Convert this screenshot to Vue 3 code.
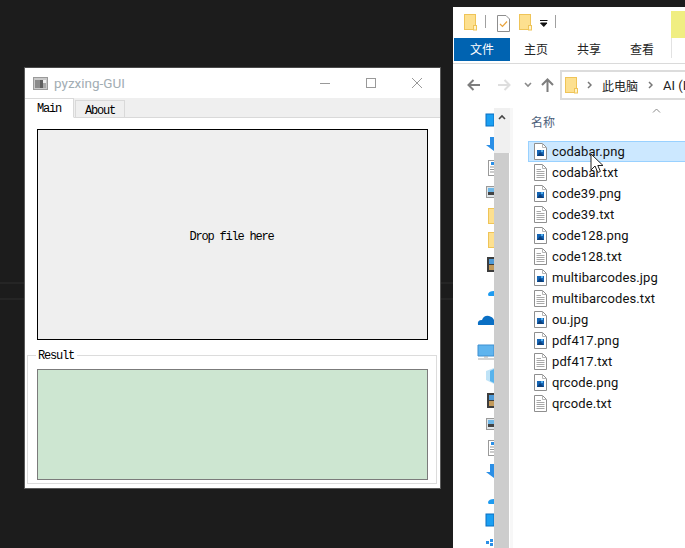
<script setup>
const files = [
  { name: 'codabar.png', type: 'img', selected: true },
  { name: 'codabar.txt', type: 'txt' },
  { name: 'code39.png', type: 'img' },
  { name: 'code39.txt', type: 'txt' },
  { name: 'code128.png', type: 'img' },
  { name: 'code128.txt', type: 'txt' },
  { name: 'multibarcodes.jpg', type: 'img' },
  { name: 'multibarcodes.txt', type: 'txt' },
  { name: 'ou.jpg', type: 'img' },
  { name: 'pdf417.png', type: 'img' },
  { name: 'pdf417.txt', type: 'txt' },
  { name: 'qrcode.png', type: 'img' },
  { name: 'qrcode.txt', type: 'txt' }
]
const folders = [208, 232]
const films = [257, 393]
const pics = [186, 418]
const docs = [160, 440]
const arrows = [137, 464]
const dots = [291, 499]
const blues = [114, 514]
</script>

<template>
  <div class="desktop">
    <div class="streak streak-a"></div>
    <div class="streak streak-b"></div>

    <section class="app-win">
      <header class="app-title">
        <svg class="app-icon" width="15" height="13" viewBox="0 0 15 13">
          <rect x="0.5" y="0.5" width="14" height="12" fill="#c9c9c9" stroke="#9a9a9a" />
          <rect x="2" y="3" width="5" height="8" fill="#8a8a8a" />
          <rect x="7" y="3" width="3" height="8" fill="#5f5f5f" />
          <rect x="10" y="3" width="3" height="3" fill="#efefef" />
          <rect x="10" y="6" width="3" height="5" fill="#a8a8a8" />
        </svg>
        <span class="app-name">pyzxing-GUI</span>
        <div class="win-btns">
          <svg width="12" height="12" viewBox="0 0 12 12"><path d="M1 6.5H11" stroke="#999" fill="none" /></svg>
          <svg width="12" height="12" viewBox="0 0 12 12"><rect x="1.5" y="1.5" width="9" height="9" stroke="#999" fill="none" /></svg>
          <svg width="12" height="12" viewBox="0 0 12 12"><path d="M1 1L11 11M11 1L1 11" stroke="#999" fill="none" /></svg>
        </div>
      </header>
      <nav class="tabs">
        <span class="tab active">Main</span>
        <span class="tab">About</span>
      </nav>
      <div class="drop">Drop file here</div>
      <fieldset class="group">
        <legend>Result</legend>
        <div class="result"></div>
      </fieldset>
    </section>

    <section class="explorer">
      <div class="quick">
        <svg width="14" height="17" viewBox="0 0 14 17"><use href="#folder" /></svg>
        <i class="qsep sep1"></i>
        <svg class="check" width="13" height="17" viewBox="0 0 13 17">
          <path d="M.5.5H9L12.5 4V16.5H.5Z" fill="#fff" stroke="#8e8e8e" />
          <path d="M3 9L5.5 11.5L10 6.5" fill="none" stroke="#e8a33c" stroke-width="1.2" />
        </svg>
        <svg class="f2" width="14" height="17" viewBox="0 0 14 17"><use href="#folder" /></svg>
        <svg class="drop-arrow" width="8" height="9" viewBox="0 0 8 9">
          <path d="M0 1.5H7.5M0.5 4H7L3.8 7.5Z" fill="#111" stroke="#111" stroke-width="1" />
        </svg>
        <i class="qsep sep2"></i>
      </div>
      <div class="ribbon">
        <span class="rtab file">文件</span>
        <span class="rtab t1">主页</span>
        <span class="rtab t2">共享</span>
        <span class="rtab t3">查看</span>
        <i class="rsep"></i>
      </div>
      <div class="nav">
        <svg width="14" height="12" viewBox="0 0 14 12" class="n-back"><path d="M13 6H2M6.5 1L1.5 6L6.5 11" fill="none" stroke="#7d7d7d" stroke-width="2" /></svg>
        <svg width="14" height="12" viewBox="0 0 14 12" class="n-fwd"><path d="M1 6H12M7.5 1L12.5 6L7.5 11" fill="none" stroke="#dedede" stroke-width="2" /></svg>
        <svg width="8" height="6" viewBox="0 0 8 6" class="n-more"><path d="M1 1L4 4L7 1" fill="none" stroke="#8a8a8a" stroke-width="1.6" /></svg>
        <svg width="13" height="14" viewBox="0 0 13 14" class="n-up"><path d="M6.5 14V2M1 7L6.5 1.5L12 7" fill="none" stroke="#7d7d7d" stroke-width="2" /></svg>
        <div class="address">
          <svg width="14" height="17" viewBox="0 0 14 17"><use href="#folder" /></svg>
          <svg class="crumb c1" width="5" height="8" viewBox="0 0 5 8"><path d="M1 1L4 4L1 7" fill="none" stroke="#777" stroke-width="1.5" /></svg>
          <span class="pc">此电脑</span>
          <svg class="crumb c2" width="5" height="8" viewBox="0 0 5 8"><path d="M1 1L4 4L1 7" fill="none" stroke="#777" stroke-width="1.5" /></svg>
          <span class="drive">AI (I:)</span>
        </div>
      </div>
      <div class="body">
        <svg class="side" width="41" height="440" viewBox="453 108 41 440">
          <g v-for="y in blues" :key="y">
            <rect x="486" :y="y" width="8" height="12" fill="#1a9ff2" stroke="#0b6fc0" />
          </g>
          <path v-for="y in arrows" :key="y" :d="`M490 ${y}H494V${y + 14}L486 ${y + 8}H490Z`" fill="#2b8fe6" />
          <g v-for="y in docs" :key="y">
            <rect x="488.5" :y="y + 0.5" width="8" height="15" fill="#fff" stroke="#9a9a9a" />
            <path :d="`M490 ${y + 7}H494M490 ${y + 9.5}H494M490 ${y + 12}H494`" stroke="#999" />
            <rect x="491" :y="y + 2" width="3" height="3" fill="#2b8fe6" />
          </g>
          <g v-for="y in pics" :key="y">
            <rect x="486.5" :y="y + 0.5" width="9" height="11" fill="#dfe6ea" stroke="#9a9a9a" />
            <rect x="488" :y="y + 2" width="6" height="4" fill="#6fb8e8" />
            <rect x="488" :y="y + 6" width="6" height="3" fill="#444" />
          </g>
          <rect v-for="y in folders" :key="y" x="488.5" :y="y + 0.5" width="8" height="15" fill="#fde08f" stroke="#efc458" />
          <g v-for="y in films" :key="y">
            <rect x="487" :y="y" width="7" height="15" fill="#3d3d3d" />
            <rect x="489" :y="y + 2" width="5" height="5" fill="#4f9bd8" />
            <rect x="489" :y="y + 8" width="5" height="5" fill="#c39a5a" />
          </g>
          <path v-for="y in dots" :key="y" :d="`M488 ${y + 3}Q489 ${y} 494 ${y}V${y + 5}H489Q488 ${y + 5} 488 ${y + 3}Z`" fill="#1e9bf0" />
          <path d="M478 325Q477 320 482 320Q484 315 489 316Q493 317 494 320V325Z" fill="#0a6fc4" />
          <path d="M478 345H494V356H478Z" fill="#5fb4ee" stroke="#3f8fd0" />
          <path d="M478 359H494M484 357H488" stroke="#a9a9a9" />
          <path d="M486 371L494 368V384L486 380Z" fill="#bfe3f7" />
          <path d="M490 371L494 369V383L490 381Z" fill="#58b3ec" />
          <path d="M486 541H489V544H486ZM490 539H493V542H490ZM490 543H493V546H490Z" fill="#2b8fe6" />
        </svg>
        <div class="scroll">
          <div class="scroll-up">
            <svg width="8" height="6" viewBox="0 0 8 6"><path d="M1 5L4 2L7 5" fill="none" stroke="#444" stroke-width="1.6" /></svg>
          </div>
          <div class="thumb"></div>
        </div>
        <div class="main">
          <div class="head">
            <svg class="sort" width="9" height="5" viewBox="0 0 9 5"><path d="M1 4.5L4.5 1L8 4.5" fill="none" stroke="#8a8a8a" /></svg>
            <span>名称</span>
          </div>
          <ul class="list">
            <li v-for="f in files" :key="f.name" class="row" :class="{ selected: f.selected }">
              <svg width="13" height="17" viewBox="0 0 13 17">
                <path d="M.5.5H8.5L12.5 4.5V16.5H.5Z" fill="#fff" stroke="#8f8f8f" />
                <path d="M8.5.5V4.5H12.5" fill="none" stroke="#b5b5b5" />
                <template v-if="f.type === 'img'">
                  <rect x="3" y="7" width="7" height="6" fill="#1565b5" />
                  <path d="M3 13L6 9L10 13Z" fill="#0d3f7a" />
                  <rect x="7" y="7" width="2" height="2" fill="#56b2f0" />
                </template>
                <path v-else d="M2.5 5.5H7M2.5 7.5H10.5M2.5 9.5H10.5M2.5 11.5H10.5M2.5 13.5H10.5" stroke="#a8a8a8" />
              </svg>
              <span class="fname">{{ f.name }}</span>
            </li>
          </ul>
        </div>
      </div>
      <div class="yellow"></div>
    </section>

    <svg class="cursor" width="14" height="21" viewBox="0 0 14 21">
      <path d="M1 1V17L5 13L7.8 19.5L10.4 18.4L7.8 12.5H13Z" fill="#fff" stroke="#222" stroke-width="1" />
    </svg>

    <svg width="0" height="0" class="defs">
      <symbol id="folder" viewBox="0 0 14 17">
        <rect x="0.5" y="0.5" width="11" height="15" fill="#fde08f" stroke="#efc458" />
        <rect x="9.5" y="11.5" width="3" height="4.5" fill="#fff3c9" stroke="#efc458" />
      </symbol>
    </svg>
  </div>
</template>

<style>
html, body { margin: 0; background: #1c1c1c; }
</style>

<style scoped>
.desktop {
  position: relative;
  width: 685px;
  height: 548px;
  overflow: hidden;
  background: #1c1c1c;
}
.streak {
  position: absolute;
  left: 0;
  width: 453px;
  height: 2px;
  background: #252525;
}
.streak-a { top: 282px; }
.streak-b { top: 298px; }
.defs { position: absolute; }

.app-win {
  position: absolute;
  left: 24px;
  top: 67px;
  width: 417px;
  height: 422px;
  box-sizing: border-box;
  border: 1px solid #5a5a5a;
  border-top-color: #4a4a4a;
  background: #fff;
}
.app-title {
  display: flex;
  align-items: center;
  height: 30px;
  padding-left: 8px;
}
.app-icon { margin-right: 6px; }
.app-name {
  font: 13.5px Roboto, sans-serif;
  color: #a2adb3;
}
.win-btns {
  margin-left: auto;
  display: flex;
  gap: 34px;
  margin-right: 17px;
}
.tabs {
  display: flex;
  align-items: flex-end;
  height: 20px;
  box-sizing: border-box;
  background: #efefef;
  border-bottom: 1px solid #d9d9d9;
}
.tab {
  box-sizing: border-box;
  width: 50px;
  height: 18px;
  margin-left: 1px;
  margin-bottom: -1px;
  text-align: center;
  font: 12px/20px "Liberation Mono", monospace;
  letter-spacing: -1.2px;
  color: #000;
  border: 1px solid #d9d9d9;
  background: #efefef;
}
.tab.active {
  width: 49px;
  height: 20px;
  margin-left: 0;
  line-height: 20px;
  background: #fff;
  border-bottom: 1px solid #fff;
  border-left: none;
}
.drop {
  box-sizing: border-box;
  width: 391px;
  height: 211px;
  margin: 11px 0 0 12px;
  padding: 5px 2px 0 0;
  border: 1px solid #000;
  background: #efefef;
  display: flex;
  align-items: center;
  justify-content: center;
  font: 12px "Liberation Mono", monospace;
  letter-spacing: -1.2px;
  color: #000;
}
.group {
  box-sizing: border-box;
  width: 410px;
  margin: 9px 0 0 2px;
  padding: 8px 0 3px 9px;
  border: 1px solid #dcdcdc;
}
.group legend {
  margin-left: -1px;
  padding: 0 3px 0 2px;
  height: 12px;
  font: 12px/14px "Liberation Mono", monospace;
  letter-spacing: -1.2px;
  color: #000;
}
.result {
  box-sizing: border-box;
  width: 391px;
  height: 111px;
  border: 1px solid #7b7b7b;
  background: #cde6d1;
}

.explorer {
  position: absolute;
  left: 453px;
  top: 7px;
  width: 232px;
  height: 541px;
  background: #fff;
  overflow: hidden;
  font-family: Roboto, "Noto Sans CJK SC", sans-serif;
}
.yellow {
  position: absolute;
  left: 218px;
  top: 4px;
  width: 14px;
  height: 27px;
  background: #f0ee82;
}
.quick {
  display: flex;
  align-items: flex-start;
  height: 31px;
  box-sizing: border-box;
  padding: 7px 0 0 11px;
}
.quick svg { flex: none; }
.qsep {
  width: 1px;
  height: 13px;
  margin-top: 1px;
  background: #a0a0a0;
}
.sep1 { margin-left: 7px; }
.check { margin-left: 11px; margin-top: 1px; }
.f2 { margin-left: 9px; }
.drop-arrow { margin-left: 7px; margin-top: 5px; }
.sep2 { margin-left: 7px; }
.ribbon {
  position: relative;
  display: flex;
  height: 26px;
  box-sizing: border-box;
  border-bottom: 1px solid #dadada;
  padding-left: 1px;
}
.rtab {
  height: 23px;
  font-size: 12px;
  line-height: 25px;
  text-align: center;
  color: #222;
}
.file {
  width: 56px;
  background: #0063b1;
  color: #fff;
}
.t1 { width: 52px; }
.t2 { width: 54px; }
.t3 { width: 52px; }
.rsep {
  width: 1px;
  height: 20px;
  margin-left: 3px;
  background: #e2e2e2;
}
.nav {
  display: flex;
  align-items: center;
  height: 44px;
  box-sizing: border-box;
  padding: 5px 0 7px 14px;
}
.nav svg { flex: none; }
.n-fwd { margin-left: 16px; }
.n-more { margin-left: 13px; }
.n-up { margin-left: 9px; }
.address {
  display: flex;
  align-items: center;
  box-sizing: border-box;
  flex: none;
  width: 130px;
  height: 30px;
  margin-left: 6px;
  padding-left: 3px;
  border: 2px solid #dcdcdc;
  border-right: none;
  font-size: 13px;
  color: #222;
  white-space: nowrap;
}
.pc { font-size: 12px; }
.c1 { margin: 0 10px 0 8px; }
.c2 { margin: 0 10px 0 10px; }
.body {
  display: flex;
  height: 441px;
}
.side { flex: none; }
.scroll {
  flex: none;
  width: 16px;
  display: flex;
  flex-direction: column;
}
.scroll-up {
  height: 45px;
  background: #f0f0f0;
  display: flex;
  justify-content: center;
  padding-top: 6px;
  box-sizing: border-box;
}
.thumb {
  flex: 1;
  width: 15px;
  background: #cdcdcd;
}
.main {
  flex: 1;
  min-width: 0;
  position: relative;
  border-left: 3px solid #f7f7f7;
}
.sort {
  position: absolute;
  left: 139px;
  top: 0;
}
.head {
  height: 33px;
  box-sizing: border-box;
  padding: 6px 0 0 18px;
  font-size: 12px;
  line-height: 18px;
  color: #4c607a;
}
.list {
  list-style: none;
  margin: 0 0 0 15px;
  padding: 0;
  width: 160px;
}
.row {
  display: flex;
  align-items: center;
  gap: 5px;
  box-sizing: border-box;
  height: 21px;
  padding-left: 5px;
  border: 1px solid transparent;
  font-size: 13px;
  letter-spacing: 0.1px;
  color: #111;
  white-space: nowrap;
}
.row.selected {
  background: #cce8ff;
  border-color: #99d1ff;
}
.cursor {
  position: absolute;
  left: 590px;
  top: 153px;
}
</style>
